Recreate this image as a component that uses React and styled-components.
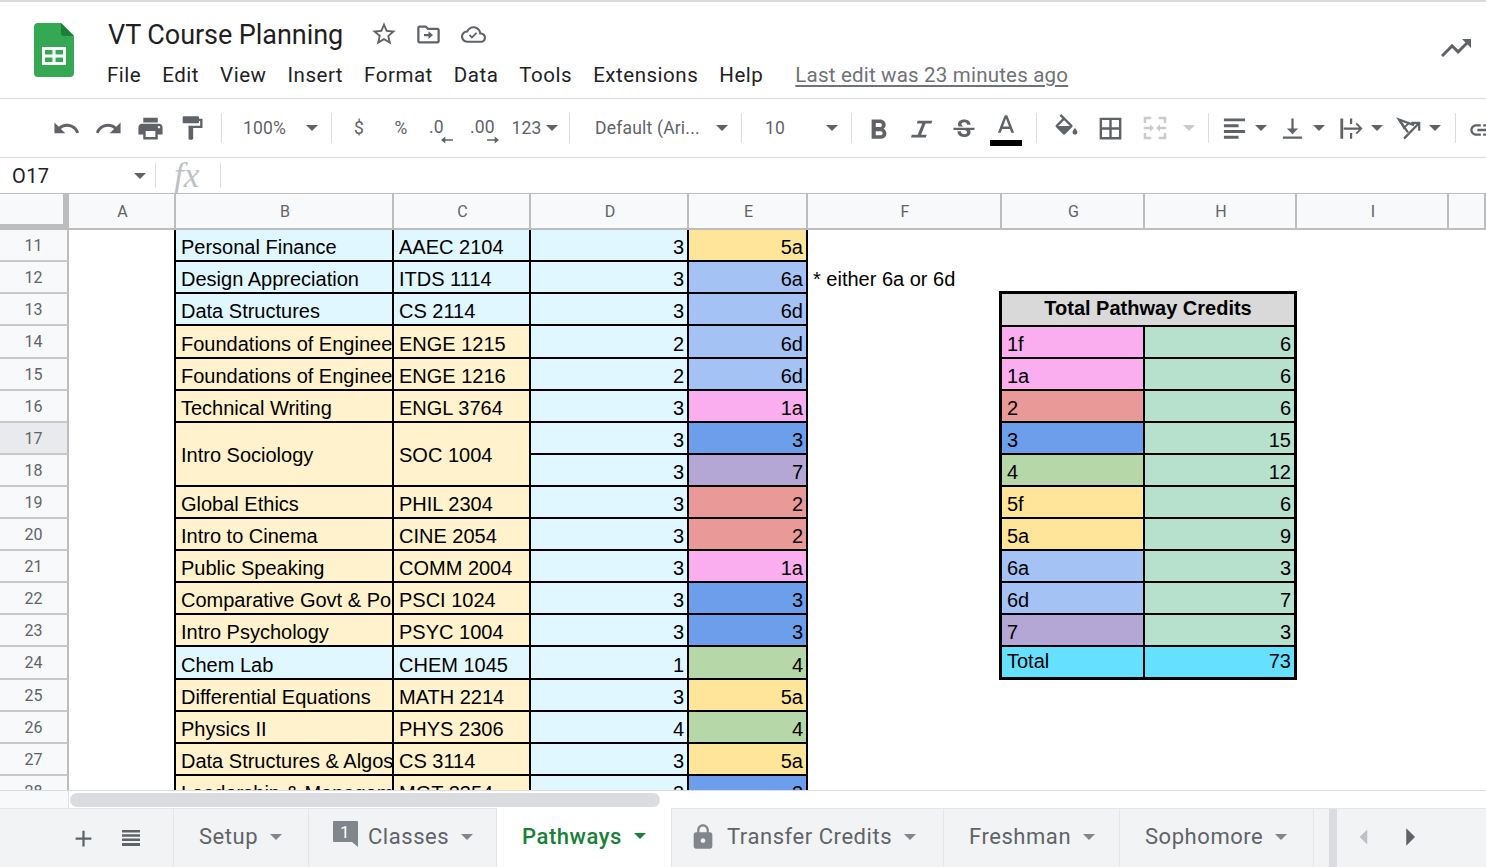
import styled, { createGlobalStyle } from "styled-components";

const GlobalStyle = createGlobalStyle`
  html, body {
    margin: 0;
    padding: 0;
    background: #fff;
    overflow: hidden;
  }
  * {
    box-sizing: border-box;
  }
`;

const Page = styled.div`
  width: 1486px;
  height: 867px;
  display: flex;
  flex-direction: column;
  overflow: hidden;
  border-top: 2px solid #dadada;
  font-family: Roboto, "Liberation Sans", sans-serif;
  color: #202124;
`;

const Header = styled.header`
  height: 97px;
  flex: none;
  display: flex;
  border-bottom: 1px solid #dadce0;
  padding: 21px 12px 0 34px;
`;

const Logo = styled.svg`
  width: 40px;
  height: 54px;
  flex: none;
`;

const TitleColumn = styled.div`
  margin-left: 34px;
  flex: 1;
  display: flex;
  flex-direction: column;
`;

const TitleRow = styled.div`
  height: 28px;
  margin-top: -2px;
  display: flex;
  align-items: center;
`;

const Title = styled.div`
  font-size: 27px;
  line-height: 28px;
  width: 253px;
  letter-spacing: -0.06px;
  color: #1f1f1f;
`;

const TitleIcon = styled.div`
  width: 45px;
  display: flex;
  justify-content: center;
  margin-top: -2px;
`;

const MenuRow = styled.nav`
  margin-top: 13px;
  margin-left: -1px;
  display: flex;
  align-items: center;
  font-size: 20.5px;
  line-height: 26px;
  letter-spacing: 0.52px;
`;

const MenuItem = styled.span`
  margin-right: 21px;
`;

const LastEdit = styled.span`
  margin-left: 11px;
  color: #6f7276;
  letter-spacing: 0.2px;
  text-decoration: underline;
  text-underline-offset: 3px;
`;

const Trend = styled.div`
  padding-top: 7px;
`;

const Icon = styled.svg`
  display: block;
  flex: none;
  width: ${(p) => p.$size || 27}px;
  height: ${(p) => p.$size || 27}px;
  fill: ${(p) => p.$color || "#5f6368"};
`;

const Toolbar = styled.div`
  height: 59px;
  flex: none;
  display: flex;
  align-items: center;
  padding-left: 45px;
  border-bottom: 1px solid #dadce0;
  overflow: hidden;
  color: #5f6368;
`;

const ToolBtn = styled.div`
  width: ${(p) => p.$w || 42}px;
  height: 36px;
  flex: none;
  display: flex;
  align-items: center;
  justify-content: center;
  padding-top: ${(p) => p.$down || 0}px;
  padding-right: ${(p) => p.$back || 0}px;
  font-size: 17.5px;
  letter-spacing: 0.2px;
`;

const Sep = styled.div`
  width: 1px;
  height: 30px;
  flex: none;
  background: #dadce0;
  margin-left: ${(p) => p.$left || 0}px;
  margin-right: ${(p) => p.$right || 0}px;
`;

const Select = styled.div`
  width: ${(p) => p.$w}px;
  flex: none;
  display: flex;
  align-items: center;
  justify-content: space-between;
  padding-left: ${(p) => p.$pad}px;
  padding-right: 13px;
  font-size: 17.5px;
  letter-spacing: 0.2px;
`;

const Caret = styled.span`
  display: block;
  flex: none;
  width: 0;
  height: 0;
  border-left: ${(p) => p.$w || 6}px solid transparent;
  border-right: ${(p) => p.$w || 6}px solid transparent;
  border-top: 6px solid ${(p) => p.$color || "#5f6368"};
  margin-left: ${(p) => p.$left || 0}px;
`;

const Decimal = styled.div`
  width: 100%;
  display: flex;
  flex-direction: column;
  align-items: flex-start;
  margin-top: 5px;
  padding-left: ${(p) => p.$pad}px;
`;

const DecimalArrow = styled.svg`
  width: 12px;
  height: 10px;
  margin-top: -2px;
  fill: #5f6368;
  margin-left: ${(p) => p.$left}px;
`;

const ColorLetter = styled.div`
  display: flex;
  flex-direction: column;
  align-items: center;
  margin-top: 4px;
`;

const ColorBar = styled.div`
  width: 32px;
  height: 6px;
  background: #000;
  margin-top: 6px;
`;

const IconDrop = styled.div`
  flex: none;
  display: flex;
  align-items: center;
  padding-left: 12px;
`;

const LinkSlot = styled.div`
  margin-top: 3px;
`;

const FormulaBar = styled.div`
  height: 35px;
  flex: none;
  display: flex;
  align-items: center;
`;

const NameBox = styled.div`
  width: 156px;
  height: 25px;
  flex: none;
  display: flex;
  align-items: center;
  justify-content: space-between;
  padding: 0 9px 0 12px;
  border-right: 1px solid #dadce0;
  font-size: 20px;
  letter-spacing: 0.4px;
  color: #202124;
`;

const FxLabel = styled.div`
  width: 65px;
  height: 25px;
  flex: none;
  border-right: 1px solid #dadce0;
  padding-left: 18px;
  font-family: "Liberation Serif", serif;
  font-style: italic;
  font-size: 35px;
  line-height: 25px;
  color: #bdc1c6;
`;

const Sheet = styled.div`
  flex: 1;
  min-height: 0;
  overflow: hidden;
  display: grid;
  grid-template-columns: 69px 107px 218px 137px 158px 119px 194px 143px 152px 152px 37px;
  grid-template-rows: 37px 32px 32px 32px 33px 32px 32px 32px 32px 32px 32px 32px 32px 32px 33px 32px 32px 32px 32px;
  align-content: start;
`;

const Corner = styled.div`
  grid-column: 1;
  grid-row: 1;
  background: #f8f9fa;
  border-top: 1px solid #bdbdbd;
  border-right: 6px solid #bdbdbd;
  border-bottom: 6px solid #bdbdbd;
`;

const ColHead = styled.div`
  grid-row: 1;
  grid-column: ${(p) => p.$col};
  background: #f8f9fa;
  border-top: 1px solid #bdbdbd;
  border-right: 2px solid #bdbdbd;
  border-bottom: 2px solid #bdbdbd;
  display: flex;
  align-items: center;
  justify-content: center;
  font-size: 16px;
  color: #5f6368;
  padding: 1px 0 0 2px;
`;

const RowHead = styled.div`
  grid-column: 1;
  grid-row: ${(p) => p.$row};
  background: ${(p) => (p.$active ? "#e8eaed" : "#f8f9fa")};
  border-right: 2px solid #bdbdbd;
  border-bottom: 2px solid #c8c8c8;
  display: flex;
  align-items: center;
  justify-content: center;
  font-size: 16px;
  color: #5f6368;
`;

const Cell = styled.div`
  grid-column: ${(p) => p.$col};
  grid-row: ${(p) => p.$row} / span ${(p) => p.$span || 1};
  background: ${(p) => p.$bg};
  border-right: 2px solid #000;
  border-bottom: 2px solid #000;
  margin-left: ${(p) => (p.$first ? "-2px" : "0")};
  border-left: ${(p) => (p.$first ? "2px solid #000" : "none")};
  padding: ${(p) => (p.$span ? "2px" : "0")} 3px ${(p) => (p.$span ? "0" : "1px")} 5px;
  display: flex;
  align-items: ${(p) => (p.$span ? "center" : "flex-end")};
  justify-content: ${(p) => (p.$right ? "flex-end" : "flex-start")};
  font-family: "Liberation Sans", Arial, sans-serif;
  font-size: 20px;
  line-height: 23px;
  color: #000;
  white-space: nowrap;
  overflow: hidden;
`;

const NoteCell = styled.div`
  grid-column: 7;
  grid-row: 3;
  padding: 0 0 2px 5px;
  display: flex;
  align-items: flex-end;
  font-family: "Liberation Sans", Arial, sans-serif;
  font-size: 20px;
  line-height: 25px;
  color: #000;
`;

const PathwayTable = styled.div`
  grid-column: 8 / span 2;
  grid-row: 4 / span 12;
  margin: -3px 0 0 -3px;
  border: 3px solid #000;
  display: grid;
  grid-template-columns: 143px 149px;
  grid-template-rows: 33px repeat(10, 32px) 30px;
  z-index: 1;
  background: #fff;
`;

const PathwayTitle = styled.div`
  grid-column: 1 / span 2;
  background: #d9d9d9;
  border-bottom: 2px solid #000;
  display: flex;
  align-items: center;
  justify-content: center;
  padding-bottom: 2px;
  font-family: "Liberation Sans", Arial, sans-serif;
  font-size: 20px;
  font-weight: 700;
  color: #000;
`;

const PathwayCell = styled.div`
  background: ${(p) => p.$bg};
  border-right: ${(p) => (p.$right ? "none" : "2px solid #000")};
  border-bottom: ${(p) => (p.$last ? "none" : "2px solid #000")};
  padding: 0 3px ${(p) => (p.$last ? "3px" : "0")} 5px;
  display: flex;
  align-items: flex-end;
  justify-content: ${(p) => (p.$right ? "flex-end" : "flex-start")};
  font-family: "Liberation Sans", Arial, sans-serif;
  font-size: 20px;
  line-height: 25px;
  color: #000;
`;

const ScrollRow = styled.div`
  height: 18px;
  flex: none;
  display: flex;
  border-top: 1px solid #dadce0;
`;

const ScrollGutter = styled.div`
  width: 69px;
  background: #f8f9fa;
  border-right: 1px solid #dadce0;
`;

const ScrollThumb = styled.div`
  width: 590px;
  height: 14px;
  margin: 2px 0 0 1px;
  border-radius: 7px;
  background: #dadce0;
`;

const TabBar = styled.div`
  height: 59px;
  flex: none;
  display: flex;
  background: #f1f3f4;
  border-top: 1px solid #e3e5e8;
`;

const TabTools = styled.div`
  width: 174px;
  flex: none;
  display: flex;
  align-items: center;
  padding-left: 70px;
  gap: 22px;
  border-right: 1px solid #e3e5e8;
`;

const Tab = styled.div`
  flex: none;
  width: ${(p) => p.$w}px;
  display: flex;
  align-items: center;
  padding: 0 0 3px ${(p) => p.$pad || 24}px;
  background: ${(p) => (p.$active ? "#fff" : "transparent")};
  color: ${(p) => (p.$active ? "#188038" : "#5f6368")};
  border-right: 1px solid #e3e5e8;
  font-size: 22px;
  font-weight: ${(p) => (p.$active ? 500 : 400)};
  letter-spacing: 0.55px;
  margin-top: ${(p) => (p.$active ? "-1px" : "0")};
`;

const TabIcon = styled.span`
  margin-right: 10px;
  display: block;
`;

const TabScrollEdge = styled.div`
  width: 8px;
  margin-left: 15px;
  flex: none;
  background: #dadce0;
`;

const TabArrows = styled.div`
  display: flex;
  align-items: center;
  padding: 0 0 3px 14px;
  gap: 18px;
`;

const courses = [
  ["Personal Finance", "AAEC 2104", 3, "5a", "blue"],
  ["Design Appreciation", "ITDS 1114", 3, "6a", "blue"],
  ["Data Structures", "CS 2114", 3, "6d", "blue"],
  ["Foundations of Engineering", "ENGE 1215", 2, "6d", "tan"],
  ["Foundations of Engineering", "ENGE 1216", 2, "6d", "tan"],
  ["Technical Writing", "ENGL 3764", 3, "1a", "tan"],
  ["Intro Sociology", "SOC 1004", 3, "3", "tan"],
  [null, null, 3, "7", "tan"],
  ["Global Ethics", "PHIL 2304", 3, "2", "tan"],
  ["Intro to Cinema", "CINE 2054", 3, "2", "tan"],
  ["Public Speaking", "COMM 2004", 3, "1a", "tan"],
  ["Comparative Govt & Pol", "PSCI 1024", 3, "3", "tan"],
  ["Intro Psychology", "PSYC 1004", 3, "3", "tan"],
  ["Chem Lab", "CHEM 1045", 1, "4", "blue"],
  ["Differential Equations", "MATH 2214", 3, "5a", "tan"],
  ["Physics II", "PHYS 2306", 4, "4", "tan"],
  ["Data Structures & Algos", "CS 3114", 3, "5a", "tan"],
  ["Leadership & Management", "MGT 2354", 3, "3", "tan"],
];

const rowColors = { blue: "#e0f7ff", tan: "#fff2cc" };

const pathwayColors = {
  "1f": "#fbaeef",
  "1a": "#fbaeef",
  2: "#ea9999",
  3: "#6d9eeb",
  4: "#b6d7a8",
  "5f": "#ffe599",
  "5a": "#ffe599",
  "6a": "#a4c2f4",
  "6d": "#a4c2f4",
  7: "#b4a7d6",
};

const credits = [
  ["1f", 6],
  ["1a", 6],
  ["2", 6],
  ["3", 15],
  ["4", 12],
  ["5f", 6],
  ["5a", 9],
  ["6a", 3],
  ["6d", 7],
  ["7", 3],
];

const columns = ["A", "B", "C", "D", "E", "F", "G", "H", "I", ""];

const menus = ["File", "Edit", "View", "Insert", "Format", "Data", "Tools", "Extensions", "Help"];

const paths = {
  star: "M22 9.24l-7.19-.62L12 2 9.19 8.63 2 9.24l5.46 4.73L5.82 21 12 17.27 18.18 21l-1.63-7.03L22 9.24zM12 15.4l-3.76 2.27 1-4.28-3.32-2.88 4.38-.38L12 6.1l1.71 4.04 4.38.38-3.32 2.88 1 4.28L12 15.4z",
  move: "M20 6h-8l-2-2H4c-1.1 0-2 .9-2 2v12c0 1.1.9 2 2 2h16c1.1 0 2-.9 2-2V8c0-1.1-.9-2-2-2zm0 12H4V6h5.17l2 2H20v10zM12 16l4-3.5L12 9v2.5H8v2h4z",
  cloud: "M19.35 10.04C18.67 6.59 15.64 4 12 4 9.11 4 6.6 5.64 5.35 8.04 2.34 8.36 0 10.91 0 14c0 3.31 2.69 6 6 6h13c2.76 0 5-2.24 5-5 0-2.64-2.05-4.78-4.65-4.96zM19 18H6c-2.21 0-4-1.79-4-4s1.79-4 4-4h.71C7.37 7.69 9.48 6 12 6c3.04 0 5.5 2.46 5.5 5.5v.5H19c1.66 0 3 1.34 3 3s-1.34 3-3 3zM10.5 13.6l-1.8-1.8-1.2 1.2 3 3 5-5-1.2-1.2z",
  trend: "M16 6l2.29 2.29-4.88 4.88-4-4L2 16.59 3.41 18l6-6 4 4 6.3-6.29L22 12V6z",
  undo: "M12.5 8c-2.65 0-5.05.99-6.9 2.6L2 7v9h9l-3.62-3.62c1.39-1.16 3.16-1.88 5.12-1.88 3.54 0 6.55 2.31 7.6 5.5l2.37-.78C21.08 11.03 17.15 8 12.5 8z",
  redo: "M18.4 10.6C16.55 8.99 14.15 8 11.5 8c-4.65 0-8.58 3.03-9.96 7.22L3.9 16c1.05-3.19 4.05-5.5 7.6-5.5 1.95 0 3.73.72 5.12 1.88L13 16h9V7l-3.6 3.6z",
  print: "M19 8H5c-1.66 0-3 1.34-3 3v6h4v4h12v-4h4v-6c0-1.66-1.34-3-3-3zm-3 11H8v-5h8v5zm3-7c-.55 0-1-.45-1-1s.45-1 1-1 1 .45 1 1-.45 1-1 1zm-1-9H6v4h12V3z",
  paint: "M18 4V3c0-.55-.45-1-1-1H5c-.55 0-1 .45-1 1v4c0 .55.45 1 1 1h12c.55 0 1-.45 1-1V6h1v4H9v11c0 .55.45 1 1 1h2c.55 0 1-.45 1-1v-9h8V4h-3z",
  bold: "M15.6 10.79c.97-.67 1.65-1.77 1.65-2.79 0-2.26-1.75-4-4-4H7v14h7.04c2.09 0 3.71-1.7 3.71-3.79 0-1.52-.86-2.82-2.15-3.42zM10 6.5h3c.83 0 1.5.67 1.5 1.5s-.67 1.5-1.5 1.5h-3v-3zm3.5 9H10v-3h3.5c.83 0 1.5.67 1.5 1.5s-.67 1.5-1.5 1.5z",
  italic: "M9.5 5H22.5l-.8 2.5H16.5L12.5 17.5H17.5L16.7 20H3.5l.8-2.5H9.5L13.5 7.5H8.700z",
  strike: "M6.85 7.08C6.85 4.37 9.45 3 12.24 3c1.64 0 3 .49 3.9 1.28.77.65 1.46 1.73 1.46 3.24h-3.01c0-.31-.05-.59-.15-.85-.29-.86-1.2-1.28-2.25-1.28-1.86 0-2.34 1.02-2.34 1.7 0 .48.25.88.74 1.21.38.25.77.48 1.41.7H7.39c-.21-.34-.54-.89-.54-1.92zM21 12v-2H3v2h9.62c1.15.45 1.96.75 1.96 1.97 0 1-.81 1.67-2.28 1.67-1.54 0-2.93-.54-2.93-2.51H6.4c0 .55.08 1.13.24 1.58.81 2.29 3.29 3.3 5.67 3.3 2.27 0 5.3-.89 5.3-4.05 0-.3-.01-1.16-.48-1.92H21V12z",
  letterA: "M11 3L5.5 17h2.25l1.12-3h6.25l1.12 3h2.25L13 3h-2zm-1.38 9L12 5.67 14.38 12H9.62z",
  fill: "M16.56 8.94L7.62 0 6.21 1.41l2.38 2.38-5.15 5.15c-.59.59-.59 1.54 0 2.12l5.5 5.5c.29.29.68.44 1.06.44s.77-.15 1.06-.44l5.5-5.5c.59-.58.59-1.53 0-2.12zM5.21 10L10 5.21 14.79 10H5.21zM19 11.5s-2 2.17-2 3.5c0 1.1.9 2 2 2s2-.9 2-2c0-1.33-2-3.5-2-3.5z",
  borders: "M3 3v18h18V3H3zm8 16H5v-6h6v6zm0-8H5V5h6v6zm8 8h-6v-6h6v6zm0-8h-6V5h6v6z",
  merge: "M3 3h6v2H5v3H3zM15 3h6v5h-2V5h-4zM3 16h2v3h4v2H3zM19 16h2v5h-6v-2h4zM3 11h5V9l3 3-3 3v-2H3zM21 11h-5V9l-3 3 3 3v-2h5z",
  align: "M2.6 3h18.800v2.500H2.600zM2.600 8.300h13v2.500h-13zM2.600 13.400h18.800v2.500H2.600zM2.600 18.500h13V21h-13z",
  valign: "M17 12h-4V3h-2v9H7l5 5 5-5zM3.500 19v2.200h17V19z",
  wrap: "M3 3h2.500v18H3zM11.500 3h2v5h-2zM11.500 16h2v5h-2zM6 11h13.500l-3-3 1.200-1.200L22.700 12l-5 5.200-1.200-1.200 3-3H6z",
  link: "M3.900 12c0-1.710 1.390-3.100 3.100-3.100h4V7H7c-2.760 0-5 2.240-5 5s2.240 5 5 5h4v-1.900H7c-1.710 0-3.100-1.390-3.100-3.100zM8 13h8v-2H8v2zm9-6h-4v1.900h4c1.710 0 3.100 1.390 3.100 3.100s-1.390 3.100-3.100 3.100h-4V17h4c2.760 0 5-2.240 5-5s-2.240-5-5-5z",
  plus: "M19 13h-6v6h-2v-6H5v-2h6V5h2v6h6z",
  list: "M3 4h18v2.500H3zM3 8.300h18v2.500H3zM3 12.600h18v2.500H3zM3 17h18v3H3z",
  lock: "M18 8h-1V6c0-2.760-2.240-5-5-5S7 3.240 7 6v2H6c-1.100 0-2 .9-2 2v10c0 1.100.9 2 2 2h12c1.100 0 2-.9 2-2V10c0-1.100-.9-2-2-2zm-6 9c-1.100 0-2-.9-2-2s.9-2 2-2 2 .9 2 2-.9 2-2 2zm3.100-9H8.900V6c0-1.710 1.390-3.100 3.100-3.100 1.710 0 3.100 1.390 3.100 3.100v2z",
  left: "M15 5v14l-7-7z",
  right: "M9 5v14l7-7z",
};

const Glyph = ({ name, size, color, box }) => (
  <Icon viewBox={box || "0 0 24 24"} $size={size} $color={color}>
    <path d={paths[name]} fillRule="evenodd" />
  </Icon>
);

const RotateGlyph = () => (
  <Icon viewBox="0 0 24 24" $size={27}>
    <g fill="none" stroke="#5f6368" strokeWidth="2">
      <path d="M11.500 15.500L3.500 4l13.500 5" />
      <path d="M3.500 4l4.500 7.500 4-4" strokeWidth="1.600" />
      <path d="M8 21L21 7.500M14.500 7H21.500V14" />
    </g>
  </Icon>
);

const SheetsLogo = () => (
  <Logo viewBox="0 0 40 54">
    <path d="M4 0h23l13 13v37a4 4 0 0 1-4 4H4a4 4 0 0 1-4-4V4a4 4 0 0 1 4-4z" fill="#34a853" />
    <path d="M27 0l13 13H30a3 3 0 0 1-3-3z" fill="#188038" />
    <path d="M8 24h24v18H8zm3 3v4.500h7.500V27zm10.500 0v4.500H29V27zM11 34.500V39h7.500v-4.500zm10.500 0V39H29v-4.500z" fill="#fff" fillRule="evenodd" />
  </Logo>
);

const ClassesBadge = () => (
  <svg width="25" height="26" viewBox="0 0 25 26">
    <path d="M1 0h23a1 1 0 0 1 1 1v25l-6-5H1a1 1 0 0 1-1-1V1a1 1 0 0 1 1-1z" fill="#80868b" />
    <text x="12" y="17" fontSize="17" fontFamily="Roboto, sans-serif" fill="#fff" textAnchor="middle">1</text>
  </svg>
);

const tabs = [
  { label: "Setup", w: 135, pad: 25 },
  { label: "Classes", w: 188, badge: true },
  { label: "Pathways", w: 175, pad: 25, active: true },
  { label: "Transfer Credits", w: 272, pad: 17, lock: true },
  { label: "Freshman", w: 176, pad: 25 },
  { label: "Sophomore", w: 194, pad: 25 },
];

const App = () => (
  <Page>
    <GlobalStyle />
    <Header>
      <SheetsLogo />
      <TitleColumn>
        <TitleRow>
          <Title>VT Course Planning</Title>
          <TitleIcon>
            <Glyph name="star" size={28} />
          </TitleIcon>
          <TitleIcon>
            <Glyph name="move" size={27} />
          </TitleIcon>
          <TitleIcon>
            <Glyph name="cloud" size={25} />
          </TitleIcon>
        </TitleRow>
        <MenuRow>
          {menus.map((m) => (
            <MenuItem key={m}>{m}</MenuItem>
          ))}
          <LastEdit>Last edit was 23 minutes ago</LastEdit>
        </MenuRow>
      </TitleColumn>
      <Trend>
        <Glyph name="trend" size={36} />
      </Trend>
    </Header>

    <Toolbar>
      <ToolBtn><Glyph name="undo" size={29} /></ToolBtn>
      <ToolBtn><Glyph name="redo" size={29} /></ToolBtn>
      <ToolBtn><Glyph name="print" size={29} /></ToolBtn>
      <ToolBtn><Glyph name="paint" size={28} /></ToolBtn>
      <Sep $left={8} />
      <Select $w={109} $pad={21}>100%<Caret /></Select>
      <Sep $right={6} />
      <ToolBtn>$</ToolBtn>
      <ToolBtn>%</ToolBtn>
      <ToolBtn $w={40}>
        <Decimal $pad={7}>
          .0
          <DecimalArrow viewBox="0 0 14 10" $left={12}><path d="M0 5l5-4v3h9v2H5v3z" /></DecimalArrow>
        </Decimal>
      </ToolBtn>
      <ToolBtn $w={44}>
        <Decimal $pad={8}>
          .00
          <DecimalArrow viewBox="0 0 14 10" $left={17}><path d="M14 5L9 1v3H0v2h9v3z" /></DecimalArrow>
        </Decimal>
      </ToolBtn>
      <ToolBtn $w={57}>123<Caret $left={4} /></ToolBtn>
      <Sep $left={6} />
      <Select $w={171} $pad={25}>Default (Ari...<Caret /></Select>
      <Sep />
      <Select $w={109} $pad={23}>10<Caret /></Select>
      <Sep $right={7} />
      <ToolBtn $down={4} $back={3}><Glyph name="bold" size={33} /></ToolBtn>
      <ToolBtn $back={4}><Glyph name="italic" size={27} /></ToolBtn>
      <ToolBtn $down={3} $back={1}><Glyph name="strike" size={28} /></ToolBtn>
      <ToolBtn>
        <ColorLetter>
          <Glyph name="letterA" size={20} box="4 2 16 16" />
          <ColorBar />
        </ColorLetter>
      </ToolBtn>
      <Sep $left={9} $right={7} />
      <ToolBtn $w={44}><Glyph name="fill" size={29} /></ToolBtn>
      <ToolBtn $w={44}><Glyph name="borders" size={29} /></ToolBtn>
      <ToolBtn $w={46}><Glyph name="merge" size={30} color="#c8cacc" /></ToolBtn>
      <Caret $left={5} $color="#c8cacc" />
      <Sep $left={13} />
      <IconDrop><Glyph name="align" size={27} /><Caret $left={7} /></IconDrop>
      <IconDrop><Glyph name="valign" size={27} /><Caret $left={7} /></IconDrop>
      <IconDrop><Glyph name="wrap" size={27} /><Caret $left={7} /></IconDrop>
      <IconDrop><RotateGlyph /><Caret $left={7} /></IconDrop>
      <Sep $left={14} $right={12} />
      <LinkSlot><Glyph name="link" size={28} /></LinkSlot>
    </Toolbar>

    <FormulaBar>
      <NameBox>O17<Caret /></NameBox>
      <FxLabel>fx</FxLabel>
    </FormulaBar>

    <Sheet>
      <Corner />
      {columns.map((c, i) => (
        <ColHead key={i} $col={i + 2}>{c}</ColHead>
      ))}
      {courses.map((row, i) => {
        const n = i + 2;
        const [name, code, hours, path, tone] = row;
        return [
          <RowHead key={`h${n}`} $row={n} $active={i + 11 === 17}>{i + 11}</RowHead>,
          name && (
            <Cell key={`b${n}`} $col={3} $row={n} $first $span={name === "Intro Sociology" ? 2 : undefined} $bg={rowColors[tone]}>
              {name}
            </Cell>
          ),
          code && (
            <Cell key={`c${n}`} $col={4} $row={n} $span={code === "SOC 1004" ? 2 : undefined} $bg={rowColors[tone]}>
              {code}
            </Cell>
          ),
          <Cell key={`d${n}`} $col={5} $row={n} $right $bg="#e0f7ff">{hours}</Cell>,
          <Cell key={`e${n}`} $col={6} $row={n} $right $bg={pathwayColors[path]}>{path}</Cell>,
        ];
      })}
      <NoteCell>* either 6a or 6d</NoteCell>
      <PathwayTable>
        <PathwayTitle>Total Pathway Credits</PathwayTitle>
        {credits.map(([label, total]) => [
          <PathwayCell key={`${label}l`} $bg={pathwayColors[label]}>{label}</PathwayCell>,
          <PathwayCell key={`${label}t`} $right $bg="#b7e1cd">{total}</PathwayCell>,
        ])}
        <PathwayCell $last $bg="#66e0ff">Total</PathwayCell>
        <PathwayCell $last $right $bg="#66e0ff">73</PathwayCell>
      </PathwayTable>
    </Sheet>

    <ScrollRow>
      <ScrollGutter />
      <ScrollThumb />
    </ScrollRow>

    <TabBar>
      <TabTools>
        <Glyph name="plus" size={27} color="#5f6368" />
        <Glyph name="list" size={24} color="#5f6368" />
      </TabTools>
      {tabs.map((t) => (
        <Tab key={t.label} $w={t.w} $pad={t.pad} $active={t.active}>
          {t.badge && <TabIcon><ClassesBadge /></TabIcon>}
          {t.lock && <TabIcon><Glyph name="lock" size={28} color="#80868b" /></TabIcon>}
          {t.label}
          <Caret $left={12} $w={6.5} $color={t.active ? "#188038" : "#80868b"} />
        </Tab>
      ))}
      <TabScrollEdge />
      <TabArrows>
        <Glyph name="left" size={26} color="#bdc1c6" />
        <Glyph name="right" size={30} color="#5f6368" />
      </TabArrows>
    </TabBar>
  </Page>
);

export default App;
